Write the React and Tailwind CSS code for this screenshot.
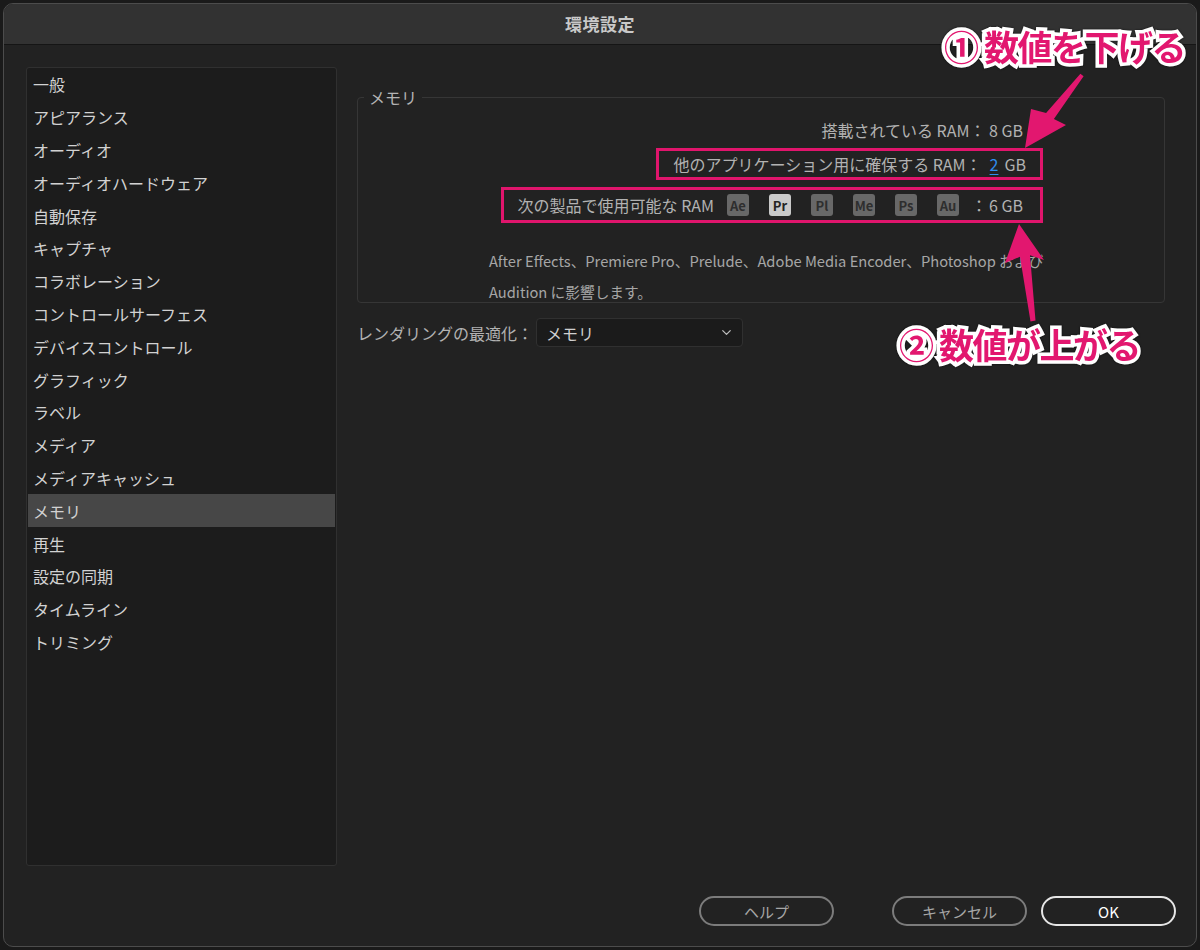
import { ChevronDown } from 'lucide-react';

const font = "font-['Noto_Sans_CJK_JP','Noto_Sans',sans-serif]";

const sections = [
  '一般',
  'アピアランス',
  'オーディオ',
  'オーディオハードウェア',
  '自動保存',
  'キャプチャ',
  'コラボレーション',
  'コントロールサーフェス',
  'デバイスコントロール',
  'グラフィック',
  'ラベル',
  'メディア',
  'メディアキャッシュ',
  'メモリ',
  '再生',
  '設定の同期',
  'タイムライン',
  'トリミング',
];

const apps = ['Ae', 'Pr', 'Pl', 'Me', 'Ps', 'Au'];

function AppBadge({ name }) {
  const active = name === 'Pr';
  return (
    <span
      className={`inline-flex items-center justify-center w-[22px] h-[22px] rounded-[3px] text-[13px] font-bold leading-none ${
        active ? 'bg-[#c9c9c9] text-[#232323]' : 'bg-[#686868] text-[#2e2e2e]'
      }`}
    >
      {name}
    </span>
  );
}

function PillButton({ children, primary }) {
  return (
    <button
      className={`h-[30px] w-[135px] rounded-full border-2 text-[15px] leading-none ${
        primary ? 'border-[#e6e6e6] text-white' : 'border-[#7c7c7c] text-[#a6a6a6]'
      }`}
    >
      {children}
    </button>
  );
}

function Callout({ className, children }) {
  return (
    <div
      className={`absolute text-[35px] font-bold leading-none whitespace-nowrap tracking-[-1.5px] text-[#e2176f] [-webkit-text-stroke:7px_#ffffff] [paint-order:stroke_fill] [filter:drop-shadow(0_0_1px_rgba(0,0,0,0.6))] ${className}`}
    >
      {children}
    </div>
  );
}

export default function App() {
  return (
    <div className={`relative w-[1200px] h-[950px] bg-[#1a1a1a] p-[3px] ${font}`}>
      <div className="flex flex-col h-full rounded-[10px] border border-[#4c4c4c] bg-[#222222] overflow-hidden">
        {/* title bar */}
        <div className="h-[41px] shrink-0 flex items-center justify-center bg-[#323232] border-b border-[#151515]">
          <span className="text-[17px] font-bold text-[#c9c9c9] tracking-[0.5px]">環境設定</span>
        </div>

        <div className="flex pl-[22px] pt-[22px]">
          {/* sidebar */}
          <div className="w-[311px] h-[799px] rounded-[3px] border border-[#303030] bg-[#1c1c1c] px-[1px]">
            {sections.map((s) => (
              <div
                key={s}
                className={`h-[32.8px] flex items-center pl-[5px] text-[16px] text-[#d2d2d2] ${
                  s === 'メモリ' ? 'bg-[#474747]' : ''
                }`}
              >
                {s}
              </div>
            ))}
          </div>

          {/* content */}
          <div className="ml-[20px] w-[808px] pt-[30px]">
            <div className="relative h-[206px] rounded-[4px] border border-[#363636] pr-[121px]">
              <span className="absolute -top-[13px] left-[6px] bg-[#222222] px-[5px] text-[16px] leading-[24px] text-[#b4b4b4]">
                メモリ
              </span>

              <div className="flex flex-col items-end pt-[20px] text-[16px] text-[#b2b2b2]">
                <div className="h-[24px] flex items-center mr-[20px]">
                  搭載されている RAM： 8 GB
                </div>

                <div className="mt-[6px] h-[32px] flex items-center border-[3px] border-[#e0156c] pl-[14px] pr-[14px]">
                  他のアプリケーション用に確保する RAM：
                  <span className="ml-[8px] text-[#2f8ded] underline underline-offset-[3px]">2</span>
                  <span className="ml-[6px]">GB</span>
                </div>

                <div className="mt-[7px] h-[36px] flex items-center border-[3px] border-[#e0156c] pl-[14px] pr-[17px]">
                  <span>次の製品で使用可能な RAM</span>
                  <div className="ml-[13px] flex items-center gap-[20px]">
                    {apps.map((a) => (
                      <AppBadge key={a} name={a} />
                    ))}
                  </div>
                  <span className="ml-[12px]">：</span>
                  <span className="ml-[2px]">6 GB</span>
                </div>
              </div>

              <p className="ml-[131px] mt-[22px] text-[14.7px] leading-[31px] text-[#a6a6a6] w-[600px]">
                After Effects、Premiere Pro、Prelude、Adobe Media Encoder、Photoshop および
                <br />
                Audition に影響します。
              </p>
            </div>

            <div className="mt-[15px] flex items-center text-[16px] text-[#b2b2b2]">
              <span>レンダリングの最適化：</span>
              <div className="ml-[3px] w-[207px] h-[29px] flex items-center justify-between rounded-[4px] border border-[#303030] bg-[#1b1b1b] pl-[9px] pr-[8px] text-[#d0d0d0]">
                <span>メモリ</span>
                <ChevronDown size={15} strokeWidth={2} className="text-[#bdbdbd]" />
              </div>
            </div>
          </div>
        </div>

        {/* footer */}
        <div className="mt-[30px] flex justify-end pr-[20px]">
          <PillButton>ヘルプ</PillButton>
          <div className="ml-[58px]">
            <PillButton>キャンセル</PillButton>
          </div>
          <div className="ml-[14px]">
            <PillButton primary>OK</PillButton>
          </div>
        </div>
      </div>

      {/* annotations */}
      <Callout className="left-[944px] top-[28px]">① 数値を下げる</Callout>
      <Callout className="left-[899px] top-[326px]">② 数値が上がる</Callout>

      <svg className="absolute left-0 top-0 pointer-events-none" width="1200" height="950">
        <polygon
          fill="#e2176f"
          points="1080.4,73.8 1046.1,112.9 1031,109 1025,148 1066,125 1053.9,119.1 1083.6,76.2"
        />
        <polygon
          fill="#e2176f"
          points="1030.5,321.4 1020,256.7 1005,263 1019,224 1044,260 1030,255.3 1035.5,320.6"
        />
      </svg>
    </div>
  );
}
